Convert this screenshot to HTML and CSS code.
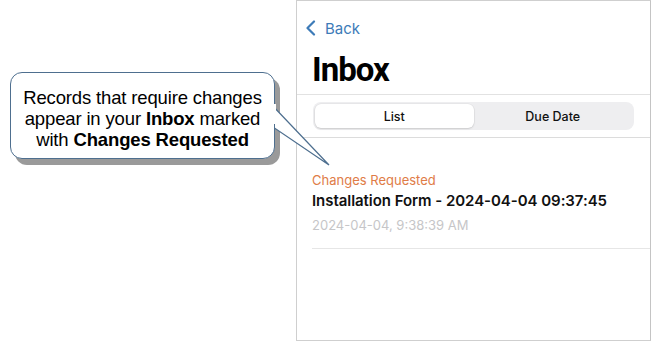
FILE: index.html
```html
<!DOCTYPE html>
<html>
<head>
<meta charset="utf-8">
<link rel="stylesheet" href="styles.css">
</head>
<body>
<div class="canvas">
  <div class="left"></div>
  <div class="phone">
    <div class="nav">
      <svg class="chev" width="11" height="16" viewBox="0 0 11 16"><path d="M9 1.5 L2.5 8 L9 14.5" fill="none" stroke="#3d7bb8" stroke-width="2.2" stroke-linecap="round" stroke-linejoin="round"/></svg>
      <span class="back">Back</span>
    </div>
    <h1 class="title">Inbox</h1>
    <div class="segbar">
      <div class="seg">
        <div class="opt sel">List</div>
        <div class="opt">Due Date</div>
      </div>
    </div>
    <div class="list">
      <div class="item">
        <div class="status">Changes Requested</div>
        <div class="name">Installation Form - 2024-04-04 09:37:45</div>
        <div class="date">2024-04-04, 9:38:39 AM</div>
      </div>
    </div>
  </div>
  <div class="callout">
    <div class="shadow"></div>
    <svg class="tail" width="340" height="170" viewBox="0 0 340 170">
      <polygon points="270,103 329,165 270,125" fill="#fff" stroke="#4e6f8f" stroke-width="1.2" stroke-linejoin="miter"/>
    </svg>
    <div class="bubble"><div class="txt">Records that require changes<br>appear in your <b>Inbox</b> marked<br>with <b>Changes Requested</b></div></div>
    <div class="patch"></div>
  </div>
</div>
</body>
</html>
```
FILE: styles.css
```css
html, body { margin: 0; padding: 0; background: #fff; }
.canvas { position: relative; width: 652px; height: 341px; display: flex; overflow: hidden; }
.left { width: 296px; flex: none; }
.phone {
  width: 353px; height: 339px; flex: none;
  border: 1px solid #cfcfcf; border-right-color: #c4c4c4;
  font-family: Inter, "Noto Sans", sans-serif;
  display: flex; flex-direction: column;
}
.nav { display: flex; align-items: center; height: 16px; margin-top: 19px; padding-left: 8px; gap: 9px; }
.chev { display: block; }
.back { font-size: 15px; color: #3d7bb8; }
.title { margin: 14px 0 0 15px; font-family: Roboto, Inter, sans-serif; font-size: 33px; font-weight: 700; letter-spacing: -1px; line-height: 40px; color: #000; height: 44px; }
.segbar { border-top: 1px solid #e2e2e2; border-bottom: 1px solid #dcdcdc; padding: 7px 16px 7px 16px; }
.seg { background: #eeeef0; border-radius: 8px; height: 28px; display: flex; padding: 2px; box-sizing: border-box; }
.opt { flex: 1; display: flex; align-items: center; justify-content: center; font-size: 12.5px; font-weight: 500; color: #111; }
.opt.sel { background: #fff; border-radius: 6px; box-shadow: 0 1px 2px rgba(0,0,0,0.12), 0 0 0 0.5px rgba(0,0,0,0.06); }
.list { padding-left: 15px; padding-top: 33px; }
.item { border-bottom: 1px solid #e6e6e6; padding-bottom: 14px; }
.status { font-size: 13px; color: #e07c47; line-height: 18px; }
.name { font-size: 15px; font-weight: 600; color: #111; line-height: 22px; margin-top: 1px; letter-spacing: -0.05px; }
.date { font-size: 13px; color: #c6c6c8; line-height: 18px; margin-top: 4px; }
.callout { position: absolute; left: 0; top: 0; width: 340px; height: 170px; pointer-events: none; }
.tail { position: absolute; left: 0; top: 0; }
.shadow { position: absolute; left: 15px; top: 78px; width: 265px; height: 87px; background: #9a9a9a; border-radius: 12px; }
.bubble {
  position: absolute; left: 10px; top: 72px; width: 265px; height: 87px; box-sizing: border-box;
  background: #fff; border: 1px solid #4e6f8f; border-radius: 12px;
  display: flex; align-items: center; justify-content: center; padding-top: 5px;
}
.txt {
  font-family: "Liberation Sans", Arial, sans-serif; font-size: 18.5px; line-height: 21px; letter-spacing: -0.15px;
  color: #000; text-align: center; white-space: nowrap;
}
.patch { position: absolute; left: 273px; top: 104px; width: 3px; height: 20px; background: #fff; }
```
